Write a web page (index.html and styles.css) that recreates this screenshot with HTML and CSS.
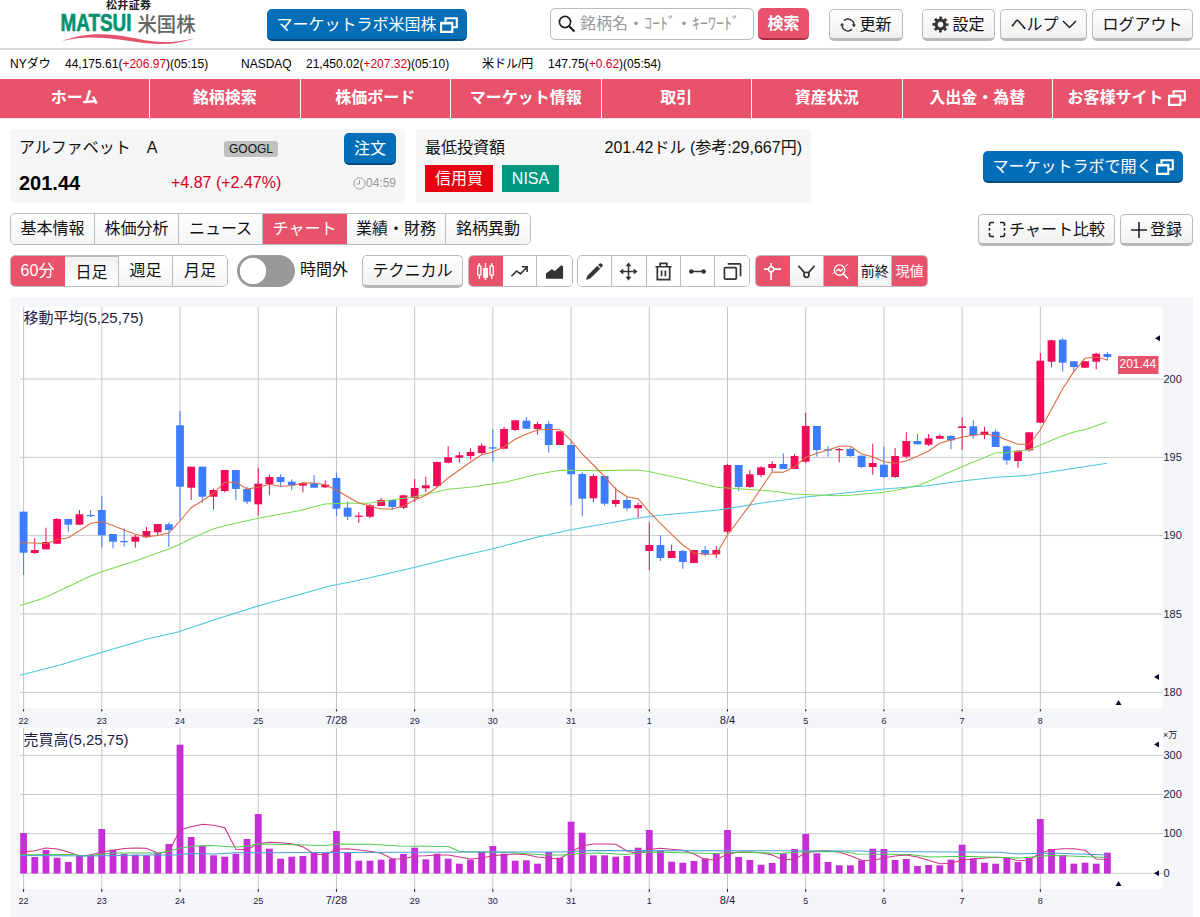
FILE: index.html
```html
<!DOCTYPE html>
<html lang="ja">
<head>
  <meta charset="UTF-8">
  <title>松井証券 米国株</title>
  <link rel="stylesheet" href="styles.css">
</head>
<body>

  <!-- Shared icons -->
  <svg class="defs" width="0" height="0">
    <symbol id="icon-window" viewBox="0 0 18 16">
      <path d="M5.500 4.500V1.200H16.800V10.300H13M1.100 5.800H12.300V14.900H1.100ZM1 6.500H12" fill="none" stroke="currentColor" stroke-width="2.100"/>
    </symbol>
  </svg>

  <!-- Header -->
  <header>
    <svg class="logo" viewBox="0 0 140 48">
      <text class="logo-top" x="46" y="9" textLength="45">松井証券</text>
      <text class="logo-main" x="0.5" y="31" textLength="71" lengthAdjust="spacingAndGlyphs">MATSUI</text>
      <text class="logo-sub" x="77.500" y="31.500" textLength="58" lengthAdjust="spacingAndGlyphs">米国株</text>
      <path d="M2 41C20 34 42 32 68 37S108 45 135 38C112 47 90 44 66 40.500S22 36 2 41Z" fill="#e5506a"/>
    </svg>
    <button class="btn blue lab">マーケットラボ米国株<svg class="i-window"><use href="#icon-window"/></svg></button>
    <div class="search">
      <svg width="18" height="18" viewBox="0 0 18 18"><circle cx="7" cy="7" r="5.600" fill="none" stroke="#222" stroke-width="1.700"/><path d="M11 11L16.500 16.500" stroke="#222" stroke-width="2.200"/></svg>
      <span>銘柄名・ｺｰﾄﾞ・ｷｰﾜｰﾄﾞ</span>
    </div>
    <button class="btn red find">検索</button>
    <button class="btn reload">
      <svg width="16" height="16" viewBox="0 0 16 16" fill="none" stroke="#333" stroke-width="1.500"><path d="M4 3.600A6 6 0 0 1 14 8M12 12.400A6 6 0 0 1 2 8"/><path d="M11.600 7.500H16L14 10.300ZM0 8.500H4.400L2 5.700Z" fill="#333" stroke="none"/></svg>更新</button>
    <button class="btn setting">
      <svg width="17" height="17" viewBox="-8.500 -8.500 17 17"><circle r="4.400" fill="none" stroke="#333" stroke-width="3"/><circle r="6.700" fill="none" stroke="#333" stroke-width="2.600" stroke-dasharray="2.700 2.562" stroke-dashoffset="1.350"/></svg>設定</button>
    <button class="btn help">ヘルプ<svg width="15" height="9" viewBox="0 0 15 9"><path d="M1 1L7.500 7.500L14 1" fill="none" stroke="#222" stroke-width="1.500"/></svg></button>
    <button class="btn logout">ログアウト</button>
  </header>

  <!-- Market ticker -->
  <div class="ticker">
    <span class="nydow">NYダウ</span><span class="nydow-val">44,175.61(<em>+206.97</em>)(05:15)</span>
    <span class="nasdaq">NASDAQ</span><span class="nasdaq-val">21,450.02(<em>+207.32</em>)(05:10)</span>
    <span class="usd">米ドル/円</span><span>147.75(<em>+0.62</em>)(05:54)</span>
  </div>

  <!-- Navigation Bar -->
  <nav>
    <a href="#">ホーム</a>
    <a href="#">銘柄検索</a>
    <a href="#">株価ボード</a>
    <a href="#">マーケット情報</a>
    <a href="#">取引</a>
    <a href="#">資産状況</a>
    <a href="#">入出金・為替</a>
    <a href="#">お客様サイト<svg class="i-window"><use href="#icon-window"/></svg></a>
  </nav>

  <!-- Stock summary -->
  <section class="summary">
    <div class="panel stock">
      <div class="line">
        <span class="name">アルファベット　A</span>
        <span class="symbol">GOOGL</span>
        <button class="btn blue order">注文</button>
      </div>
      <div class="line second">
        <strong>201.44</strong>
        <span class="change">+4.87 (+2.47%)</span>
        <span class="time"><svg width="13" height="13" viewBox="0 0 13 13" fill="none" stroke="#999"><circle cx="6.500" cy="6.500" r="5.600"/><path d="M6.500 3V7H3.500"/></svg>04:59</span>
      </div>
    </div>
    <div class="panel invest">
      <div class="line">
        <span>最低投資額</span>
        <span>201.42ドル (参考:29,667円)</span>
      </div>
      <div class="tags"><span class="tag margin">信用買</span><span class="tag nisa">NISA</span></div>
    </div>
    <button class="btn blue open">マーケットラボで開く<svg class="i-window"><use href="#icon-window"/></svg></button>
  </section>

  <!-- Tabs -->
  <div class="tabs">
    <div class="group">
      <button>基本情報</button>
      <button>株価分析</button>
      <button>ニュース</button>
      <button class="active">チャート</button>
      <button class="wide">業績・財務</button>
      <button>銘柄異動</button>
    </div>
    <button class="btn compare"><svg width="18" height="17" viewBox="0 0 18 17"><path d="M1.500 5V3Q1.500 1.500 3 1.500H6M12 1.500H15Q16.500 1.500 16.500 3V5M16.500 12V14Q16.500 15.500 15 15.500H12M6 15.500H3Q1.500 15.500 1.500 14V12M1.500 7V9.500M16.500 7V9.500" fill="none" stroke="#222" stroke-width="1.600"/></svg>チャート比較</button>
    <button class="btn add"><svg width="16" height="16" viewBox="0 0 16 16"><path d="M0 8H16M8 0V16" stroke="#222" stroke-width="1.600"/></svg>登録</button>
  </div>

  <!-- Chart toolbar -->
  <div class="toolbar">
    <div class="group period">
      <button class="active">60分</button>
      <button class="hover">日足</button>
      <button>週足</button>
      <button>月足</button>
    </div>
    <span class="toggle"></span>
    <span class="after">時間外</span>
    <button class="btn tech">テクニカル</button>
    <div class="group icons">
      <button class="active"><svg viewBox="0 0 20 20" fill="none" stroke="#fff" stroke-width="1.500"><path d="M3.500 1V4M3.500 14V18M10 1V6M10 17V19M16.500 1V4M16.500 14V18"/><rect x="1.800" y="4" width="3.400" height="10" rx="1"/><rect x="8.200" y="7" width="3.600" height="9" fill="#fff"/><rect x="14.800" y="4" width="3.400" height="10" rx="1"/></svg></button>
      <button><svg viewBox="0 0 20 20" fill="none" stroke="#333" stroke-width="1.700"><path d="M1.500 15L7 9.500L11 12.500L17.500 5.800M12.500 5H18V10.500"/></svg></button>
      <button><svg viewBox="0 0 20 20" fill="#333"><path d="M1 17.500V12L7 7.500L10.500 9.500L17 3.500L19 4.500V17.500Z"/></svg></button>
    </div>
    <div class="group icons">
      <button><svg viewBox="0 0 20 20" fill="#333"><path d="M1.500 18.500L2.800 14.500L13 4.300L15.700 7L5.500 17.200ZM14.200 3.200L15.500 1.900Q16.500 1.200 17.400 2.100L18 2.700Q18.700 3.500 18 4.400L16.800 5.700Z" stroke="#333" stroke-width="0.600"/></svg></button>
      <button><svg viewBox="0 0 20 20" fill="none" stroke="#333" stroke-width="1.600"><path d="M10 2.500V17.500M2.500 10H17.500"/><path d="M10 .5L13.200 4.500H6.800ZM10 19.500L13.200 15.500H6.800ZM.5 10L4.500 6.800V13.200ZM19.500 10L15.500 6.800V13.200Z" fill="#333" stroke="none"/></svg></button>
      <button><svg viewBox="0 0 20 20" fill="none" stroke="#333" stroke-width="1.800"><path d="M1.500 5H18.500M6.500 4.500V1.500H13.500V4.500M3.500 5V18.500H16.500V5M8 9V15M12 9V15"/></svg></button>
      <button><svg viewBox="0 0 20 20"><path d="M3 10H17" stroke="#333" stroke-width="1.800"/><circle cx="3.500" cy="10" r="2.400" fill="#333"/><circle cx="16.500" cy="10" r="2.400" fill="#333"/></svg></button>
      <button><svg viewBox="0 0 20 20" fill="none" stroke="#333" stroke-width="1.800"><rect x="1.500" y="6" width="12.500" height="12" rx="1"/><path d="M5 2H17.500Q18.500 2 18.500 3V15"/></svg></button>
    </div>
    <div class="group icons">
      <button class="active"><svg viewBox="0 0 20 20" fill="none" stroke="#fff" stroke-width="1.700"><path d="M8.500 1V5M8.500 10.500V19M1 7.500H5.500M11.500 7.500H19"/><circle cx="8.500" cy="7.700" r="2.700"/></svg></button>
      <button class="shade"><svg viewBox="0 0 20 20" fill="none" stroke="#333" stroke-width="1.800"><path d="M1.500 4L8 11.500M18.500 4L12 11.500"/><circle cx="10" cy="13.500" r="2.700"/></svg></button>
      <button class="active"><svg viewBox="0 0 20 20" fill="none" stroke="#fff" stroke-width="1.500"><circle cx="9" cy="8.500" r="5.500"/><path d="M13 12.500L18 17.500M5.500 9.500L8 7.500L10 9.500L12.500 7"/><path d="M1 13L3 11M15 5L18 2" stroke-width="1"/></svg></button>
      <button class="small shade">前終</button>
      <button class="small active">現値</button>
    </div>
  </div>

  <!-- Price and volume chart, drawn by chart.js -->
  <svg id="chart" width="1183" height="620" viewBox="10 297 1183 620"></svg>

  <script src="chart.js"></script>
</body>
</html>
```
FILE: styles.css
```css
* {
  box-sizing: border-box;
}

body {
  font-family: "Liberation Sans", "Noto Sans CJK JP", sans-serif;
  font-size: 16px;
  line-height: 20px;
  color: #111;
  margin: 0;
  width: 1200px;
  height: 917px;
  overflow: hidden;
  background-color: #fff;
}

svg {
  display: block;
  flex: none;
}

.defs {
  display: none;
}

.i-window {
  width: 18px;
  height: 16px;
}

button {
  font-family: inherit;
  font-size: 16px;
  line-height: 20px;
  color: #111;
  padding: 0;
  margin: 0;
  white-space: nowrap;
}

.btn {
  display: flex;
  justify-content: center;
  align-items: center;
  gap: 3px;
  height: 32px;
  padding-top: 1px;
  border: 1px solid #bbb;
  border-bottom: 3px solid #b8b8b8;
  border-radius: 5px;
  background: linear-gradient(#fff, #f1f1f1);
}

.btn.blue {
  color: #fff;
  background: #036eb8;
  border: none;
  border-bottom: 2px solid #02497c;
}

.btn.red {
  color: #fff;
  font-weight: bold;
  background: #e8536b;
  border: none;
  border-bottom: 2px solid #a92d43;
}

/* Header */
header {
  display: flex;
  align-items: flex-start;
  height: 50px;
  padding-top: 9px;
  border-bottom: 2px solid #d9d9d9;
}

.logo {
  width: 140px;
  height: 48px;
  margin: -9px 0 -8px 60px;
}

.logo-top {
  font: bold 11px "Noto Sans CJK JP", sans-serif;
  fill: #222;
}

.logo-main {
  font: bold 23px "Liberation Sans", sans-serif;
  fill: #009270;
  stroke: #009270;
  stroke-width: 0.6;
}

.logo-sub {
  font: 500 20px "Noto Sans CJK JP", sans-serif;
  fill: #666;
}

.lab {
  width: 200px;
  margin-left: 67px;
}

.search {
  display: flex;
  align-items: center;
  gap: 4px;
  width: 204px;
  height: 32px;
  margin: -1px 4px 0 83px;
  padding-left: 7px;
  border: 1px solid #bbb;
  border-radius: 5px;
  color: #999;
  white-space: nowrap;
}

.find {
  width: 51px;
  margin-top: -1px;
}

.reload {
  width: 74px;
  margin-left: 20px;
}

.setting {
  width: 73px;
  margin-left: 19px;
}

.help {
  width: 87px;
  margin: 0 5px;
}

.logout {
  width: 101px;
}

/* Market ticker */
.ticker {
  display: flex;
  align-items: center;
  height: 29px;
  padding: 0 0 1px 10px;
  font-size: 12px;
  color: #000;
}

.ticker em,
.change {
  font-style: normal;
  color: #d7001f;
}

.nydow {
  width: 55px;
}

.nydow-val {
  width: 176px;
}

.nasdaq {
  width: 65px;
}

.nasdaq-val {
  width: 176px;
}

.usd {
  width: 66px;
}

/* Navigation Bar */
nav {
  display: flex;
  height: 40px;
  background-color: #e8536b;
  border-bottom: 1px solid #fbe3e7;
}

nav a {
  display: flex;
  flex: 0 0 150.5px;
  justify-content: center;
  align-items: center;
  gap: 4px;
  padding-bottom: 1px;
  border-right: 1px solid #fff;
  color: #fff;
  font-weight: bold;
  text-decoration: none;
  white-space: nowrap;
}

nav a:first-child {
  flex-basis: 150px;
}

nav a:last-child {
  flex: 1;
  border-right: none;
}

/* Stock summary */
.summary {
  display: flex;
  padding: 10px 17px 10px 10px;
}

.panel {
  width: 395px;
  height: 74px;
  border-radius: 4px;
  background-color: #f6f6f6;
}

.line {
  display: flex;
  align-items: center;
}

.stock {
  padding: 4px 9px 0 9px;
}

.name {
  width: 205px;
  padding-bottom: 3px;
}

.symbol {
  width: 54px;
  height: 16px;
  border-radius: 3px;
  background-color: #c0c0c0;
  font-size: 12px;
  line-height: 17px;
  text-align: center;
}

.order {
  width: 52px;
  margin-left: auto;
}

.second {
  padding-top: 8px;
}

.second strong {
  width: 152px;
  color: #000;
  font-size: 20px;
}

.time {
  display: flex;
  align-items: center;
  margin-left: auto;
  color: #999;
  font-size: 12px;
}

.invest {
  margin-left: 11px;
  padding: 9px 9px 0 9px;
}

.invest .line {
  justify-content: space-between;
}

.tags {
  display: flex;
  gap: 9px;
  margin-top: 7px;
}

.tag {
  height: 27px;
  color: #fff;
  line-height: 27px;
  text-align: center;
}

.margin {
  width: 68px;
  background-color: #e60012;
}

.nisa {
  width: 57px;
  background-color: #009781;
}

.open {
  width: 200px;
  margin: 22px 0 0 auto;
}

/* Tabs */
.group {
  display: flex;
  height: 32px;
  border: 1px solid #bbb;
  border-radius: 5px;
  overflow: hidden;
}

.group button {
  display: flex;
  justify-content: center;
  align-items: center;
  border: none;
  border-right: 1px solid #bbb;
  background: linear-gradient(#fff, #f4f4f4);
}

.group button:last-child {
  border-right: none;
}

.group button.active {
  color: #fff;
  background: #e8536b;
  border-color: #e8536b;
}

.tabs {
  display: flex;
  padding: 0 7px 0 10px;
}

.tabs .group button {
  width: 84px;
}

.tabs .group .wide {
  width: 99px;
}

.compare {
  width: 137px;
  margin: 1px 5px 0 auto;
}

.add {
  width: 73px;
  margin-top: 1px;
}

/* Chart toolbar */
.toolbar {
  display: flex;
  height: 42px;
  padding: 0 0 0 10px;
  margin-top: 9px;
}

.period button {
  width: 54px;
}

.group .hover {
  padding-top: 3px;
  background: linear-gradient(#f1f1f1, #fff);
  border-top: 1px solid #bbb;
}

.toggle {
  width: 58px;
  height: 32px;
  margin: 0 5px 0 9px;
  border-radius: 16px;
  background: radial-gradient(circle at 16px 16px, #fff 12.8px, #999 13.6px);
}

.after {
  padding-top: 5px;
}

.tech {
  width: 101px;
  height: 33px;
  margin: 0 5px 0 14px;
}

.icons {
  margin-right: 4.6px;
}

.icons button {
  width: 34.2px;
  background: #fff;
}

.icons button.shade {
  background: linear-gradient(#fff, #f1f1f1);
}

.icons svg {
  width: 19px;
  height: 19px;
}

.icons .small {
  font-size: 14px;
}

/* Chart */
#chart {
  margin-left: 10px;
}

#chart text {
  font-size: 11px;
  fill: #1b1b44;
}

#chart .title {
  font-size: 15px;
}

#chart .day {
  font-size: 9px;
  text-anchor: middle;
}

#chart .week {
  font-size: 11px;
  text-anchor: middle;
}

#chart .unit {
  font-size: 9px;
}

#chart .last {
  font-size: 12px;
  fill: #fff;
}
```
FILE: chart.js
```js
const chart = document.getElementById("chart");
const RED = "#f00a58";
const BLUE = "#3d7bff";
const STEP = 11.173;
const X0 = 23.6;

// direction, high, body top, body bottom, low
const candles = [
  ["d",511.7,511.7,552.7,575],["u",538,550,553,554],["u",527.7,542,549.3,549.3],["u",518,519,543.7,544],["d",519,519,524.7,531.7],["u",510,514.3,524.7,525],["d",510,515,515.7,517],
  ["d",496.3,510,535.3,547.3],["d",534,534,541.7,548.3],["d",528.3,541,541.7,546.7],["u",535,536.7,541.7,547.7],["u",527,531,537.3,538],["u",524,524,532.3,535],["d",522.3,524.3,530,547],
  ["d",411,425.3,486.7,520],["u",466.7,466.7,487.7,500],["d",466.7,466.7,496.7,502.7],["u",488.7,490,496.7,509.3],["u",470,470,491,492.3],["d",470,470,489,500],["d",486.7,489,501.7,504],
  ["u",467.7,483.7,504.3,515.7],["u",474.7,477,484,495.3],["d",474.3,477,482,487.3],["d",479.3,481.7,485.3,490.3],["u",482,483.3,485.7,492.3],["d",475,483.3,487.7,488],["u",480.3,484.7,487.3,488],
  ["d",472.7,478,508.7,516],["d",501.3,507.7,516.7,520],["u",512.3,515.7,516.7,522.7],["u",504,505.3,516.7,518],["u",497.7,500,506,506],["d",500,500,507,510],["u",494.7,495.3,507.7,509],
  ["u",479,488,498,502],["u",476.7,485.3,488.3,492.3],["u",461.3,462,486,487],["u",446.3,457.3,462.7,463.5],["u",452,455.3,457.7,463],["u",448.3,452,456,459.3],["u",443.3,445.7,453,454],
  ["d",429.3,447.3,448.3,461.7],["u",426.7,429,448.7,449],["u",420.3,420.3,430,431],["d",417,420.7,428.7,429],["u",421.7,424,429,434.7],["d",421,424,445,452.7],["u",431.3,431.3,445,445],
  ["d",442,445,474.3,505.3],["d",472.3,474,498.7,516.3],["u",474,476,498.3,502.3],["d",476,476,503.7,505.7],["u",487.3,500,504,507],["d",496.7,500,508.3,510.7],["u",502.7,505,508.3,517.7],
  ["u",522.3,545,551,570],["d",535.3,545,558,561],["u",544.7,551,558,558],["d",550,551,562,568.7],["u",550,550,563,563],["d",546,550,554.3,556.3],["u",546,550,554.3,558],
  ["u",464,465,531.7,533.7],["d",465,465,487,491.3],["u",470,474.3,487,488],["u",466.3,467.3,475,477],["u",461,464,468,471.3],["d",453.3,464,469,469],["u",454,456,469,469],
  ["u",412.7,426,461.7,463.3],["d",426,426,450,456.7],["d",446,449.3,450.3,456.7],["u",448,449,450,462.3],["d",447.7,449,456,457],["d",455.7,455.7,467,468],["u",443.7,463,467,474.7],
  ["d",446.7,464.7,477,478],["u",448,456,477,478],["u",432.3,441,456.7,458.5],["d",434,441,444.3,444.3],["u",434,438.3,444.7,446],["u",434.5,436,438.7,439],["d",435,436,440.3,449.3],
  ["u",417.3,426.3,428,449.7],["d",420.3,426.3,435.3,438.7],["u",426.7,431.7,435,439],["d",429.3,431.7,447,447],["d",445.3,446.3,460.3,464.7],["u",450,450.7,461,467.7],["u",432.3,432.3,450.3,451.7],
  ["u",353,360.7,422.7,423],["u",339.7,340.3,361.7,367.3],["d",338.3,339.7,362.7,371.7],["d",361,361.3,367,371.7],["u",361,361.3,367.7,368],["u",352.7,353.7,361.7,369.3],["d",352,354,357,360.7]
];

// top edge of each volume bar
const volume = [
  833,857,850,857.7,862,856,854.7, 829,849.7,854,854.7,855.3,852.7,844, 744.7,837,846,855.3,856.7,853.7,839,
  814,848.7,858.7,856.7,856,852,852, 831,852,860.7,860.7,859.7,858.7,854, 847.7,859.3,853.7,858.7,863.7,859.7,851.7,
  846,853.7,860.7,860.3,863.7,852,857.7, 821.7,832.7,855.3,855.3,856.7,856,847.7, 830,850.3,861.7,862.7,861,858.3,853.7,
  830,857,860,864.7,863,853.3,849, 834,853.3,862,865.3,865.3,860.3,848.7, 849,860,859,866,865,865.3,859.7,
  844.7,858.3,862.7,863.7,857.7,862,858, 819,849,855,863.7,862.7,863.7,852.7
];

// short moving averages, one value per bar
const priceMa5 = [
  542.7,543,543.7,539.7,537.7,530.7,523.3,521.7,525.5,530,534.3,536.7,535.5,533,521,507.7,500.7,493.3,482.3,482.3,489,
  487.3,484.3,486.3,485.7,482.7,483,484.7,490,496.7,503,506,509,509,506,500,495.3,487.3,478,470,462,454.7,
  452,446.7,439.3,434,430,429.3,429.7,440.7,454,465,476.7,489.3,496.7,498.7,512,523.3,534.3,545,553,554.3,554,
  535,520,505,488.3,472,472.3,466.7,457.3,453.3,450,446.3,446.3,454,456.7,461.7,463.3,461,456.3,451,443.3,440,
  437,435.3,434,435.7,440,444.3,444.3,430,409.3,388.7,371.7,358.3,357,360
];
const volumeMa5 = [
  852,850.7,848,849,852,856,855,852,850.3,848.5,848,848.3,853,851.7,830,826.7,824.3,825.3,827.7,849.3,849.7,
  843.7,842.3,842.7,843.7,846.7,854,855,849.3,848.7,850,851.3,853.3,858.7,859,856,855.7,855,855,857,859,858,
  855.7,854.7,854,854.7,857,858.3,858.7,851.7,846,844,844,844.3,851,853.7,849.3,848.3,849.3,850.3,854,859.7,859.7,
  854,852.3,852,852.7,855,860,859,853,851,850.7,852.3,855.7,860.3,860.7,857.7,856,855,857,860.3,863.7,863.3,
  860,859,858,857.3,857.7,860.7,860,853,849.7,848.7,848.7,850.3,859,859.3
];

// long moving averages, x,y points
const priceMa25 = "20,605.5 38,600 46,597 68,586.7 90,576.3 101.7,571.7 133,561.7 168,549.3 180,544.3 191.7,538.3 213,529 226.7,525.3 258,518.3 300,510.5 325,504 345,503.3 368,503.3 415,496.7 448,489.3 470,487.3 507,481.7 537,474.3 560,470.3 600,470.6 638,470 650,471.7 683,479 716.7,487.3 760,490.3 772,491 793,494 837,495.7 850,495.3 883,492.3 897,490 920,485 962,466.7 996,452.7 1005,452.7 1018,451.3 1029,449.7 1040,445.3 1060,436.7 1073,432.3 1087,429 1107,422";
const priceMa75 = "20,675.3 60,665 101,652.5 147,639 178,632 220,618 258,606 330,586 360,580 415,567.3 453,557.7 493,548.7 537,537.3 571,529.7 638,518 660,515.3 717,510.3 760,503.3 806,497 884,489 927,485.7 962,481 996,477.3 1029,475.3 1050,472 1107,463.3";
const volumeMa25 = "20,854.7 75,854.5 82,856 95,855 112,853 160,853 170,851 180,848 195,846 210,845.5 235,847 245,846.5 258,844 285,844.5 325,845.5 340,844 370,844.3 400,846 448,846.5 460,851.5 510,852.5 530,854 545,855 565,855 580,853.5 600,853 625,854.5 650,852 715,853.5 740,852 780,853.5 800,852 835,851.5 845,852 857,854 910,854.5 930,857 965,856.3 1020,858 1050,855.5 1070,856 1107,857.5";
const volumeMa75 = "20,855.5 90,856 150,855 175,855 190,853.5 215,854 235,852.8 500,852 560,852 590,850.5 860,851 870,851.5 1000,852.3 1018,854 1050,853 1107,855";

const days = ["22", "23", "24", "25", "7/28", "29", "30", "31", "1", "8/4", "5", "6", "7", "8"];

const x = i => X0 + STEP * i;
const rect = (left, top, w, h, fill) => `<rect x="${left}" y="${top}" width="${w}" height="${h}" fill="${fill}"/>`;
const line = (x1, y1, x2, y2, color) => `<line x1="${x1}" y1="${y1}" x2="${x2}" y2="${y2}" stroke="${color}"/>`;
const text = (left, top, cls, label) => `<text x="${left}" y="${top}" class="${cls}">${label}</text>`;
const curve = (points, color) => `<polyline points="${points}" fill="none" stroke="${color}" stroke-width="1.100"/>`;
const series = values => `20,${values[0]} ` + values.map((v, i) => `${x(i)},${v}`).join(" ");
const arrowLeft = (left, top) => `<path d="M${left} ${top}l5 -3v6z" fill="#0b0b33"/>`;
const arrowUp = (left, top) => `<path d="M${left} ${top}l3 5h-6z" fill="#0b0b33"/>`;

let out = rect(10, 297, 1183, 620, "#f5f6f9");
out += rect(20, 307, 1143, 401, "#fff") + rect(20, 728, 1143, 161, "#fff");

// Grid
[[200, 379], [195, 457.4], [190, 535.6], [185, 614], [180, 692.4]].forEach(([label, y]) => {
  out += line(20, y, 1163, y, "#c6caca") + text(1163.5, y + 3.5, "axis", label);
});
[[300, 755.3], [200, 794.5], [100, 833.7], [0, 873.3]].forEach(([label, y]) => {
  out += line(20, y, 1163, y, "#c6caca") + text(1163.5, y + 3.5, "axis", label);
});
days.forEach((label, d) => {
  const left = x(d * 7);
  const cls = label.includes("/") ? "week" : "day";
  out += line(left, 307, left, 708, "#c2c6c6") + line(left, 728, left, 889, "#c2c6c6");
  out += line(left, 709, left, 711.5, "#222") + line(left, 889, left, 892, "#222");
  out += text(left, 723.5, cls, label) + text(left, 904, cls, label);
});

// Candles
candles.forEach(([dir, high, top, bottom, low], i) => {
  const color = dir === "u" ? RED : BLUE;
  out += line(x(i), high, x(i), low, color);
  out += rect(x(i) - 3.9, top, 7.8, Math.max(bottom - top, 1.2), color);
});
out += curve(priceMa75, "#4cc8d8") + curve(priceMa25, "#7bdc50") + curve(series(priceMa5), "#dd6a40");

// Volume
volume.forEach((top, i) => {
  out += rect(x(i) - 3.4, top, 6.8, 873.5 - top, "#c62fd8");
});
out += curve(series(volumeMa5), "#cf3487") + curve(volumeMa25, "#4fc850") + curve(volumeMa75, "#4aa0d8");

// Labels and markers
out += text(23.5, 322.5, "title", "移動平均(5,25,75)") + text(23.5, 744.5, "title", "売買高(5,25,75)");
out += text(1163, 738, "unit", "×万");
out += rect(1118, 356, 40.5, 18, "#e8536b") + text(1119.5, 368, "last", "201.44");
out += arrowLeft(1155, 338.300) + arrowLeft(1154, 677) + arrowLeft(1154, 744.500) + arrowLeft(1154, 873.300);
out += arrowUp(1118.500, 700) + arrowUp(1118.500, 881);

chart.innerHTML = out;
```
